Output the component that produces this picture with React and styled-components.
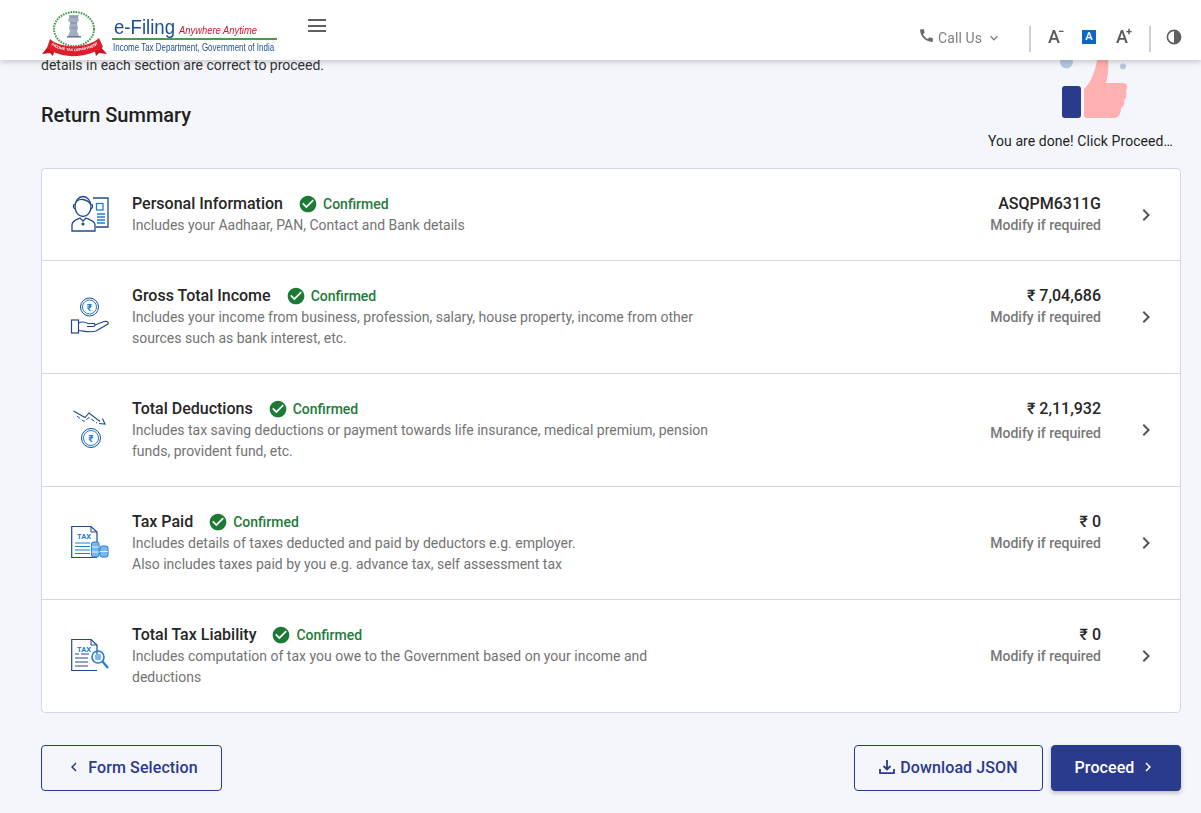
import React from 'react';
import styled, { createGlobalStyle } from 'styled-components';
import { MdCall, MdCheckCircle, MdChevronRight, MdKeyboardArrowDown, MdChevronLeft } from 'react-icons/md';

const NAVY = '#2a3a8c';
const ICON_NAVY = '#1f4b8e';
const ICON_BLUE = '#1c7ed6';

const GlobalStyle = createGlobalStyle`
    html, body {
        margin: 0;
        padding: 0;
        background: #f4f6fb;
        font-family: Roboto, "Liberation Sans", sans-serif;
        color: #1f1f1f;
        overflow: hidden;
    }
    * {
        box-sizing: border-box;
    }
`;

const Header = styled.header`
    position: fixed;
    top: 0;
    left: 0;
    right: 0;
    height: 60px;
    background: #fff;
    box-shadow: 0 2px 6px rgba(0, 0, 0, 0.2);
    display: flex;
    align-items: flex-start;
    padding-left: 41px;
    z-index: 10;
`;

const LogoWrap = styled.div`
    width: 240px;
    height: 50px;
    margin-top: 9px;
`;

const Hamburger = styled.div`
    margin: 19px 0 0 27px;
    width: 18px;
    height: 13px;
    display: flex;
    flex-direction: column;
    justify-content: space-between;

    span {
        display: block;
        height: 2px;
        background: #5f5f5f;
    }
`;

const HeaderTools = styled.div`
    margin-left: auto;
    display: flex;
    align-items: center;
    height: 26px;
    margin-top: 26px;
    padding-right: 19px;
`;

const CallUs = styled.div`
    display: flex;
    align-items: center;
    color: #808080;
    font-size: 14px;
    letter-spacing: 0.1px;
    margin-top: -3px;

    svg:first-child {
        margin-right: 3px;
        color: #6a6a6a;
        margin-top: -5px;
    }
    svg:last-child {
        margin-left: 4px;
    }
`;

const Divider = styled.div`
    width: 2px;
    height: 26px;
    background: #cfcfcf;
    margin: ${({ $margin }) => $margin};
`;

const FontButton = styled.div`
    position: relative;
    width: 16px;
    font-size: 18px;
    font-weight: 500;
    color: #5a5a5a;
    line-height: 18px;
    margin-top: -5px;

    sup {
        position: absolute;
        left: 10px;
        top: -2px;
        font-size: 11px;
        line-height: 11px;
        font-weight: 700;
    }
`;

const ActiveFont = styled.div`
    width: 14px;
    height: 14px;
    background: #0b66c8;
    color: #fff;
    font-size: 11px;
    font-weight: 500;
    text-align: center;
    line-height: 14px;
    margin: -5px 20px 0 18px;
`;

const Page = styled.main`
    padding: 50px 20px 22px 41px;
    height: 813px;
`;

const Hero = styled.section`
    display: flex;
    justify-content: space-between;
    height: 118px;
`;

const HeroLeft = styled.div`
    padding-top: 5px;
`;

const HeroNote = styled.p`
    margin: 0;
    font-size: 14px;
    line-height: 21px;
    color: #333;
`;

const PageTitle = styled.h1`
    margin: 25px 0 0;
    font-size: 20px;
    line-height: 28px;
    font-weight: 500;
    color: #1f1f1f;
`;

const HeroRight = styled.div`
    margin-right: 8px;
    display: flex;
    flex-direction: column;
`;

const Thumb = styled.svg`
    display: block;
    margin-left: 67px;
`;

const DoneText = styled.div`
    margin-top: 9px;
    font-size: 14px;
    line-height: 20px;
    letter-spacing: 0.07px;
    color: #1f1f1f;
`;

const Card = styled.section`
    background: #fff;
    border: 1px solid #d4d6e8;
    border-radius: 4px;
`;

const Row = styled.div`
    display: flex;
    align-items: center;
    padding: 22px 22px 24px 28px;
    border-bottom: 1px solid #d4d6e8;

    &:last-child {
        border-bottom: none;
    }
`;

const IconBox = styled.div`
    width: 40px;
    height: 40px;
    margin-right: 22px;
    flex-shrink: 0;
`;

const RowText = styled.div`
    flex: 1;
`;

const TitleLine = styled.div`
    display: flex;
    align-items: center;
    height: 24px;
    padding-top: 2px;
`;

const RowTitle = styled.h2`
    margin: 0 15px 0 0;
    font-size: 16px;
    line-height: 24px;
    font-weight: 500;
    color: #262626;
`;

const Status = styled.span`
    display: inline-flex;
    align-items: center;
    gap: 5px;
    font-size: 14px;
    font-weight: 500;
    color: #1f7a3a;

    svg {
        color: #1b7a33;
    }
`;

const RowDesc = styled.p`
    margin: 0;
    max-width: 580px;
    font-size: 14px;
    line-height: 21px;
    color: #737373;
`;

const RowValue = styled.div`
    text-align: right;
    margin-right: 33px;
    align-self: flex-start;
`;

const Amount = styled.div`
    height: 24px;
    padding-top: 1px;
    font-size: 16px;
    line-height: 24px;
    font-weight: 500;
    color: #262626;
`;

const Modify = styled.div`
    margin-top: ${({ $shift }) => $shift || 0}px;
    font-size: 14px;
    line-height: 21px;
    font-weight: 500;
    color: #787878;
`;

const Chevron = styled(MdChevronRight)`
    color: #555;
    margin-top: 2px;
`;

const Footer = styled.footer`
    display: flex;
    align-items: center;
    margin-top: 32px;
    gap: 8px;
`;

const Button = styled.button`
    height: 46px;
    width: ${({ $width }) => $width}px;
    display: inline-flex;
    align-items: center;
    justify-content: center;
    padding: 0 0 2px;
    font-family: inherit;
    font-size: 16px;
    font-weight: 500;
    letter-spacing: 0.1px;
    border-radius: 4px;
    border: 1px solid ${NAVY};
    color: ${({ $primary }) => ($primary ? '#fff' : NAVY)};
    background: ${({ $primary }) => ($primary ? NAVY : 'transparent')};
    box-shadow: ${({ $primary }) => ($primary ? '0 2px 4px rgba(0,0,0,0.25)' : 'none')};
    margin-right: ${({ $pushRight }) => ($pushRight ? 'auto' : '0')};
`;

const Logo = () => (
    <svg width="240" height="50" viewBox="0 0 240 50">
        {/* emblem */}
        <ellipse cx="33" cy="20" rx="20" ry="17" fill="none" stroke="#3d9a4a" strokeWidth="2" strokeDasharray="1.6 1" />
        <path d="M28 6h10l-1 3 1 2-2 3 1 5-1 3 2 5H27l2-5-1-3 1-5-2-3 1-2z" fill="#a3aec0" />
        <path d="M29 8h8M30 14h6M30 19h6" stroke="#6d7d98" strokeWidth="0.7" />
        <rect x="26" y="27" width="14" height="1.6" fill="#6d7d98" />
        <path d="M9 35 L1 45 L9 44 L12 47 L14 39Z M57 35 L66 45 L58 44 L55 47 L53 39Z" fill="#c9131f" />
        <path d="M9 30 C20 40 46 40 58 29 L62 38 C46 50 20 50 6 39Z" fill="#dd1f2d" />
        <path id="ribbonArc" d="M8 34 C20 45 46 45 60 33" fill="none" />
        <text fontSize="3.7" fontWeight="700" fill="#fff" fontFamily="Liberation Sans, sans-serif">
            <textPath href="#ribbonArc" startOffset="3">INCOME TAX DEPARTMENT</textPath>
        </text>
        {/* wordmark */}
        <text x="73" y="25" fontSize="21" fill="#1c4f8f" fontFamily="Liberation Sans, sans-serif" textLength="61" lengthAdjust="spacingAndGlyphs">e-Filing</text>
        <text x="138" y="25" fontSize="11" fontStyle="italic" fill="#d7142b" fontFamily="Liberation Sans, sans-serif" textLength="78" lengthAdjust="spacingAndGlyphs">Anywhere Anytime</text>
        <rect x="71" y="29" width="165" height="2" fill="#4a9a4a" />
        <text transform="translate(72 42) scale(0.76 1)" fontSize="10.5" fill="#1c4f8f" fontFamily="Liberation Sans, sans-serif">Income Tax Department, Government of India</text>
    </svg>
);

const ThumbsUp = () => (
    <Thumb width="74" height="72" viewBox="0 0 74 72">
        <circle cx="11.5" cy="12" r="6.5" fill="#b7c8e0" />
        <circle cx="68" cy="16.5" r="3" fill="#b7c8e0" />
        <rect x="7" y="36" width="19" height="32" rx="3" fill={NAVY} />
        <path d="M29 39 C36 33 41 20 43 4 L53 4 C54 18 53 26 51 33 L68 33 C73 33 73 38 71 41 C72 46 71 49 69 50 C70 54 68 57 66 58 C66 63 64 67 60 68 L32 68 C30 68 29 67 29 65 Z" fill="#ffb0b0" />
    </Thumb>
);

const RupeeCoin = ({ cx, cy, r }) => (
    <g>
        <circle cx={cx} cy={cy} r={r} fill="none" stroke={ICON_NAVY} strokeWidth="1" />
        <circle cx={cx} cy={cy} r={r - 2} fill="none" stroke={ICON_BLUE} strokeWidth="1" />
        <text x={cx} y={cy + 3.5} fontSize="10" textAnchor="middle" fill={ICON_BLUE} fontWeight="700" fontFamily="Roboto, sans-serif">₹</text>
    </g>
);

const TaxDoc = ({ children }) => (
    <svg width="40" height="40" viewBox="0 0 40 40" fill="none">
        <path d="M27 22V10L21 4.5H1.7V35.5H27" stroke={ICON_NAVY} strokeWidth="1.2" />
        <path d="M21 4.5V10H27" stroke={ICON_NAVY} strokeWidth="1" />
        <text x="14" y="16.5" fontSize="7.5" fontWeight="700" textAnchor="middle" fill={ICON_BLUE} fontFamily="Roboto, sans-serif">TAX</text>
        {children}
    </svg>
);

const PersonIcon = () => (
    <svg width="40" height="40" viewBox="0 0 40 40" fill="none" stroke={ICON_NAVY} strokeWidth="1.3">
        <path d="M23 4H38V33H26" />
        <ellipse cx="13" cy="12.5" rx="8" ry="10" fill="#fff" />
        <path d="M5 11C6 6 9 5 13 5.5C16 6 19 7 21 11" />
        <path d="M4.5 10C3 11 3 14 5 15M21.5 10C23 11 23 14 21 15" />
        <path d="M2 37V31C2 27 6 26 10 24L13 27L16 24C20 26 25 27 25 31V37H2Z" fill="#fff" />
        <circle cx="13" cy="30" r="0.9" fill={ICON_NAVY} />
        <rect x="26.5" y="9.5" width="6.5" height="6.5" stroke={ICON_BLUE} />
        <path d="M27 20H35M27 23H35M27 26H35M27 29H35" stroke={ICON_BLUE} />
    </svg>
);

const IncomeIcon = () => (
    <svg width="40" height="40" viewBox="0 0 40 40" fill="none">
        <RupeeCoin cx={19.5} cy={11} r={9} />
        <rect x="1.5" y="24" width="7" height="13" stroke={ICON_NAVY} strokeWidth="1.2" />
        <path d="M8.5 27C12 25 15 26 18 27.5H24C26 28 25 30.5 23 30.5H17M25 29L34 25.5C37 25 39 26 38 28L26 35C20 37 14 35 8.5 34.5" stroke={ICON_NAVY} strokeWidth="1.2" />
    </svg>
);

const DeductionIcon = () => (
    <svg width="40" height="40" viewBox="0 0 40 40" fill="none">
        <path d="M3.5 2L15 8.5L19 4L30 12.5M32.5 9.5L35 15L29 14.5" stroke={ICON_NAVY} strokeWidth="1.1" />
        <path d="M7 7L14 12.5L19 8.5L27 14" stroke={ICON_NAVY} strokeWidth="1" strokeDasharray="4 2" />
        <RupeeCoin cx={21} cy={29} r={9.5} />
    </svg>
);

const TaxPaidIcon = () => (
    <TaxDoc>
        <path d="M5 21H20M5 24.5H20M5 28H20M5 31.5H20" stroke={ICON_BLUE} strokeWidth="1.1" />
        <rect x="21.5" y="20" width="7.5" height="15" rx="2" fill="#7db8ec" stroke={ICON_BLUE} />
        <rect x="30" y="24" width="8" height="11" rx="2" fill="#7db8ec" stroke={ICON_BLUE} />
        <path d="M21.5 25H29M21.5 30H29M30 29.5H38" stroke="#fff" strokeWidth="0.8" />
    </TaxDoc>
);

const LiabilityIcon = () => (
    <TaxDoc>
        <path d="M5 19H9M11 19H19M5 23H18M5 27H18M5 31H18" stroke={ICON_NAVY} strokeWidth="1.1" />
        <circle cx="28" cy="22" r="6" stroke={ICON_BLUE} strokeWidth="1.6" />
        <circle cx="28" cy="22" r="3.2" fill="#7db8ec" />
        <path d="M32.5 26.5L38 33" stroke={ICON_BLUE} strokeWidth="2.2" />
    </TaxDoc>
);

const DownloadIcon = () => (
    <svg width="16" height="16" viewBox="0 0 16 16" fill="none" stroke={NAVY} strokeWidth="1.8" style={{ marginRight: 5 }}>
        <path d="M8 1V10M4.5 7L8 10.5L11.5 7" />
        <path d="M1 10V14.2H15V10" strokeLinejoin="round" />
    </svg>
);

const ContrastIcon = () => (
    <svg width="16" height="16" viewBox="0 0 16 16" style={{ marginTop: -5 }}>
        <circle cx="8" cy="8" r="6.6" fill="none" stroke="#5f5f5f" strokeWidth="1.6" />
        <path d="M8 1.4A6.6 6.6 0 0 1 8 14.6Z" fill="#5f5f5f" />
    </svg>
);

const sections = [
    { title: 'Personal Information', desc: 'Includes your Aadhaar, PAN, Contact and Bank details', value: 'ASQPM6311G', icon: <PersonIcon /> },
    { title: 'Gross Total Income', desc: 'Includes your income from business, profession, salary, house property, income from other sources such as bank interest, etc.', value: '₹ 7,04,686', icon: <IncomeIcon /> },
    { title: 'Total Deductions', desc: 'Includes tax saving deductions or payment towards life insurance, medical premium, pension funds, provident fund, etc.', value: '₹ 2,11,932', icon: <DeductionIcon />, shift: 3 },
    { title: 'Tax Paid', desc: <>Includes details of taxes deducted and paid by deductors e.g. employer.<br />Also includes taxes paid by you e.g. advance tax, self assessment tax</>, value: '₹ 0', icon: <TaxPaidIcon /> },
    { title: 'Total Tax Liability', desc: 'Includes computation of tax you owe to the Government based on your income and deductions', value: '₹ 0', icon: <LiabilityIcon /> },
];

const App = () => {
    return (
        <>
            <GlobalStyle />
            <Header>
                <LogoWrap><Logo /></LogoWrap>
                <Hamburger><span /><span /><span /></Hamburger>
                <HeaderTools>
                    <CallUs>
                        <MdCall size={17} />
                        Call Us
                        <MdKeyboardArrowDown size={16} />
                    </CallUs>
                    <Divider $margin="0 17px 0 27px" />
                    <FontButton>A<sup>−</sup></FontButton>
                    <ActiveFont>A</ActiveFont>
                    <FontButton>A<sup>+</sup></FontButton>
                    <Divider $margin="0 15px 0 17px" />
                    <ContrastIcon />
                </HeaderTools>
            </Header>
            <Page>
                <Hero>
                    <HeroLeft>
                        <HeroNote>details in each section are correct to proceed.</HeroNote>
                        <PageTitle>Return Summary</PageTitle>
                    </HeroLeft>
                    <HeroRight>
                        <ThumbsUp />
                        <DoneText>You are done! Click Proceed…</DoneText>
                    </HeroRight>
                </Hero>
                <Card>
                    {sections.map((item) => (
                        <Row key={item.title}>
                            <IconBox>{item.icon}</IconBox>
                            <RowText>
                                <TitleLine>
                                    <RowTitle>{item.title}</RowTitle>
                                    <Status><MdCheckCircle size={20} />Confirmed</Status>
                                </TitleLine>
                                <RowDesc>{item.desc}</RowDesc>
                            </RowText>
                            <RowValue>
                                <Amount>{item.value}</Amount>
                                <Modify $shift={item.shift}>Modify if required</Modify>
                            </RowValue>
                            <Chevron size={24} />
                        </Row>
                    ))}
                </Card>
                <Footer>
                    <Button $width={181} $pushRight><MdChevronLeft size={18} style={{ marginRight: 5 }} />Form Selection</Button>
                    <Button $width={189}><DownloadIcon />Download JSON</Button>
                    <Button $width={130} $primary>Proceed<MdChevronRight size={18} style={{ marginLeft: 5 }} /></Button>
                </Footer>
            </Page>
        </>
    );
};

export default App;
